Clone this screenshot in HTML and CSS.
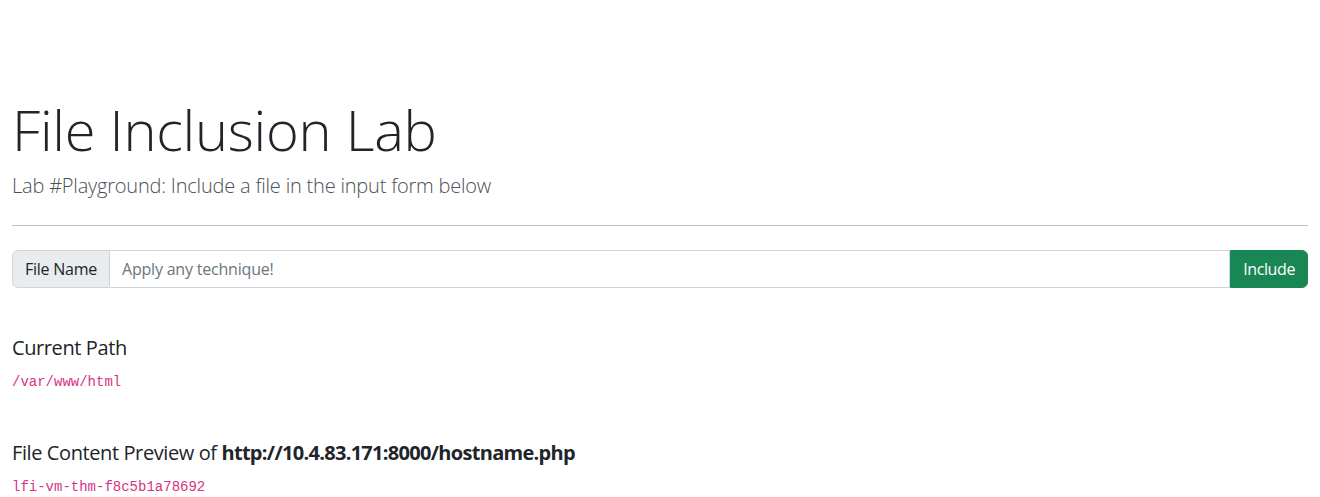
FILE: index.html
```html
<!DOCTYPE html>
<html lang="en">
<head>
<meta charset="utf-8">
<title>File Inclusion Lab</title>
<link rel="stylesheet" href="styles.css">
</head>
<body>
<main class="container">
  <header class="hero">
    <h1 class="display">File Inclusion Lab</h1>
    <p class="lead">Lab #Playground: Include a file in the input form below</p>
  </header>
  <hr class="divider">
  <form class="input-group">
    <span class="input-label">File Name</span>
    <input class="input-field" type="text" placeholder="Apply any technique!">
    <button class="btn-include" type="button">Include</button>
  </form>
  <section class="block">
    <h5 class="block-title">Current Path</h5>
    <code class="code">/var/www/html</code>
  </section>
  <section class="block">
    <h5 class="block-title">File Content Preview of <b>http://10.4.83.171:8000/hostname.php</b></h5>
    <code class="code">lfi-vm-thm-f8c5b1a78692</code>
  </section>
</main>
</body>
</html>
```
FILE: styles.css
```css
* { box-sizing: border-box; }
html, body { margin: 0; padding: 0; }
body {
  font-family: "Open Sans", "Noto Sans", sans-serif;
  font-size: 16px;
  line-height: 1.5;
  color: #212529;
  background: #fff;
}
.container {
  padding: 0 12px;
}
.hero { padding-top: 96px; }
.display {
  margin: 0 0 8px;
  font-size: 56px;
  font-weight: 300;
  line-height: 1.2;
  letter-spacing: -0.25px;
}
.lead {
  margin: 0 0 16px;
  font-size: 20px;
  font-weight: 300;
  color: #495057;
  letter-spacing: -0.2px;
}
.divider {
  margin: 24px 0 24px;
  border: 0;
  border-top: 1px solid #bfc2c5;
}
.input-group {
  display: flex;
  height: 38px;
}
.input-label {
  display: flex;
  align-items: center;
  padding: 0 12px;
  background: #e9ecef;
  border: 1px solid #ced4da;
  border-radius: 6px 0 0 6px;
  font-size: 16px;
  letter-spacing: -0.25px;
}
.input-field {
  flex: 1;
  border: 1px solid #ced4da;
  border-left: 0;
  padding: 0 12px;
  font: inherit;
  letter-spacing: -0.2px;
  color: #212529;
}
.input-field::placeholder { color: #6c757d; }
.btn-include {
  background: #198754;
  color: #fff;
  border: 1px solid #198754;
  border-radius: 0 6px 6px 0;
  padding: 0 12px;
  font: inherit;
  letter-spacing: -0.4px;
}
.block { margin-top: 48px; }
.block-title {
  margin: 0 0 8px;
  font-size: 20px;
  font-weight: 400;
  line-height: 1.2;
  letter-spacing: -0.4px;
}
.block-title b { font-weight: 700; letter-spacing: -0.7px; }
.code {
  font-family: "Liberation Mono", monospace;
  font-size: 14px;
  color: #d63384;
}
```
